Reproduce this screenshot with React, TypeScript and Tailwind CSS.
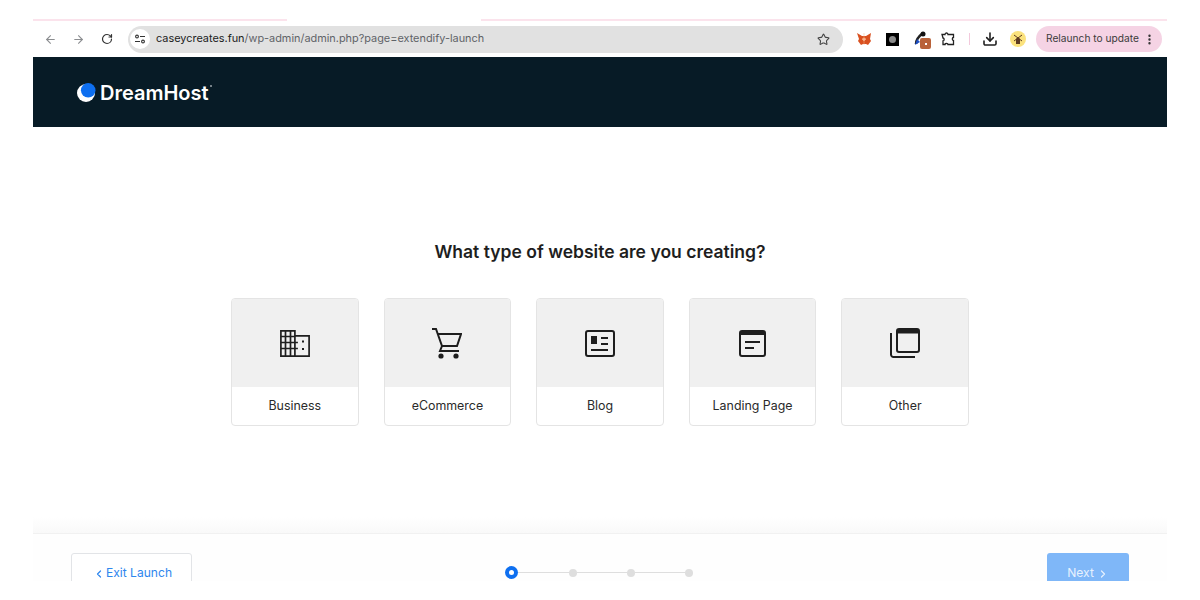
import { ArrowLeft, ArrowRight, ChevronLeft, ChevronRight, Download, EllipsisVertical, RotateCw, Star } from "lucide-react";

const font = "font-['Inter','Liberation_Sans',sans-serif]";

function BusinessIcon() {
  return (
    <svg width="30" height="27" viewBox="0 0 30 27" fill="none" stroke="#1e1e1e" strokeWidth="1.7">
      <path d="M.9.9h14v25.2H.9zM14.9 5.9h14.2v20.2H14.9zM.9 6.5h14M.9 12.5h17M.9 18.5h17M5.5.9v25.2M10.5.9v25.2" />
      <path d="M23 10.5v2M23 18v2" strokeWidth="2" />
    </svg>
  );
}

function CartIcon() {
  return (
    <svg width="30" height="31" viewBox="0 0 30 31" fill="none" stroke="#1e1e1e" strokeWidth="2">
      <path d="M0 1h4l6 17h15l4-12H6" />
      <path d="M10 18l-2 5h19" />
      <circle cx="9" cy="28" r="2.6" fill="#1e1e1e" stroke="none" />
      <circle cx="24" cy="28" r="2.6" fill="#1e1e1e" stroke="none" />
    </svg>
  );
}

function BlogIcon() {
  return (
    <svg width="30" height="27" viewBox="0 0 30 27" fill="none" stroke="#1e1e1e" strokeWidth="2">
      <rect x="1" y="1" width="28" height="25" rx="2" />
      <rect x="6" y="6" width="6" height="8" fill="#1e1e1e" stroke="none" />
      <path d="M16 8h7M16 14h7M6 20h17" />
    </svg>
  );
}

function LandingIcon() {
  return (
    <svg width="27" height="27" viewBox="0 0 27 27" fill="none" stroke="#1e1e1e" strokeWidth="2">
      <rect x="1" y="1" width="25" height="25" rx="2" />
      <path d="M1 3h25" strokeWidth="4" />
      <path d="M6 12h15M6 18h9" />
    </svg>
  );
}

function OtherIcon() {
  return (
    <svg width="30" height="30" viewBox="0 0 30 30" fill="none" stroke="#1e1e1e" strokeWidth="2">
      <rect x="7" y="1" width="22" height="23" rx="2" />
      <path d="M7 3.5h22" strokeWidth="4" />
      <path d="M1 5v21.5A2.5 2.5 0 0 0 3.5 29H25" />
    </svg>
  );
}

function Logo() {
  return (
    <svg width="19" height="19" viewBox="0 0 19 19">
      <circle cx="9" cy="10" r="9" fill="#fff" />
      <circle cx="11.2" cy="7.3" r="7.3" fill="#0e6ff0" />
    </svg>
  );
}

function Extensions() {
  return (
    <div className="flex items-center">
      <svg width="14" height="12" viewBox="0 0 14 12" className="ml-[14px]">
        <path d="M0 0l5 3h4l5-3-1 6 1 2-3 4-2-1H6l-2 1-3-4 1-2z" fill="#d9501f" />
        <path d="M5 6l2 2 2-2-2-1zM7 0v12" fill="#f7b58f" stroke="#f7b58f" strokeWidth=".5" />
      </svg>
      <div className="ml-[15px] flex h-[13px] w-[13px] items-center justify-center bg-black">
        <div className="h-[7px] w-[7px] rounded-full bg-[#8a8a8a]" />
      </div>
      <div className="relative ml-[15px] h-[16px] w-[16px]">
        <svg width="14" height="15" viewBox="0 0 14 15">
          <path d="M2 13C2 8 5 5 9 2" stroke="#222" strokeWidth="2.5" fill="none" />
          <circle cx="9" cy="3" r="2.5" fill="#111" />
          <path d="M1 14l2-6 3 3z" fill="#1c4fc4" />
        </svg>
        <div className="absolute left-[6px] top-[7px] flex h-[11px] w-[11px] items-center justify-center rounded-[2px] bg-[#b9623a]">
          <div className="h-[2px] w-[2px] bg-white" />
        </div>
      </div>
      <svg width="14" height="14" viewBox="0 0 14 14" fill="none" stroke="#222" strokeWidth="1.3" className="ml-[11px]">
        <path d="M1 2.5h3c0-2 3-2 3 0h5.5v3c-1.6 0-1.6 3 0 3v4H7c0-1.5-3-1.5-3 0H2V9c1.5 0 1.5-3 0-3z" />
      </svg>
      <div className="ml-[14px] h-[12px] w-px bg-[#f3c9dc]" />
      <Download size={16} color="#1f1f1f" strokeWidth={2.4} className="ml-[12px]" />
      <div className="ml-[12px] flex h-[16px] w-[16px] items-center justify-center rounded-full bg-[#fbe27d]">
        <svg width="10" height="10" viewBox="0 0 10 10">
          <path d="M3 10V5l2-2 2 2v5z" fill="#5d3a22" />
          <path d="M1 7l8-6M1 1l8 6" stroke="#5d3a22" strokeWidth="1" />
        </svg>
      </div>
    </div>
  );
}

function BrowserBar() {
  return (
    <div className="flex h-[36px] items-center pl-[11px] pr-[5px]">
      <ArrowLeft size={13} color="#8b8d90" />
      <ArrowRight size={13} color="#8b8d90" className="ml-[15px]" />
      <RotateCw size={12} color="#333" strokeWidth={2.4} className="ml-[16px]" />
      <div className="ml-[15px] flex h-[27px] w-[715px] items-center rounded-full bg-[#e1e1e1] pl-[2px] pr-[13px]">
        <div className="flex h-[20px] w-[20px] items-center justify-center rounded-full bg-white">
          <svg width="12" height="10" viewBox="0 0 12 10" fill="none" stroke="#333" strokeWidth="1.1">
            <circle cx="3" cy="2.5" r="1.4" />
            <path d="M6 2.5h5M1 7.5h5" />
            <circle cx="9" cy="7.5" r="1.4" />
          </svg>
        </div>
        <span className="mb-px ml-[6px] text-[10.9px] text-[#5f6368]">
          <span className="text-[#222]">caseycreates.fun</span>/wp-admin/admin.php?page=extendify-launch
        </span>
        <Star size={13} color="#444" className="ml-auto" />
      </div>
      <Extensions />
      <div className="ml-[10px] flex h-[26px] flex-1 items-center justify-between rounded-full bg-[#f5d3e4] pl-[10px] pr-[6px]">
        <span className="text-[10.2px] text-[#3b3b3b]">Relaunch to update</span>
        <EllipsisVertical size={13} color="#333" strokeWidth={2.4} />
      </div>
    </div>
  );
}

const cards = [
  { label: "Business", icon: <BusinessIcon /> },
  { label: "eCommerce", icon: <CartIcon /> },
  { label: "Blog", icon: <BlogIcon /> },
  { label: "Landing Page", icon: <LandingIcon /> },
  { label: "Other", icon: <OtherIcon /> },
];

export default function App() {
  return (
    <div className={`${font} h-[600px] w-[1200px] overflow-hidden bg-white px-[33px] pt-[19px]`}>
      <div className="flex h-[2px]">
        <div className="w-[254px] bg-[#fbe3ec]" />
        <div className="w-[194px]" />
        <div className="flex-1 bg-[#fbe3ec]" />
      </div>
      <BrowserBar />
      <div className="flex h-[70px] items-center bg-[#071b26] pl-[44px]">
        <Logo />
        <span className="ml-[4px] mt-[2px] text-[20px] font-semibold leading-none text-white">DreamHost</span>
        <span className="mb-[12px] ml-[1px] h-[2px] w-[2px] rounded-full bg-[#9aa3a8]" />
      </div>
      <main className="flex h-[406px] flex-col items-center bg-gradient-to-b from-white from-[96%] to-[#f9f9f9] pt-[113px]">
        <h1 className="text-[17.55px] font-semibold leading-[24px] text-[#1e1e1e]">What type of website are you creating?</h1>
        <div className="mt-[34px] flex gap-[25px]">
          {cards.map((c) => (
            <div key={c.label} className="flex h-[128px] w-[127.6px] flex-col overflow-hidden rounded-[4px] border border-[#e4e4e4] bg-white">
              <div className="flex h-[88px] items-center justify-center bg-[#f0f0f0]">{c.icon}</div>
              <div className="flex flex-1 items-center justify-center pt-px text-[12.4px] text-[#2a2a2a]">{c.label}</div>
            </div>
          ))}
        </div>
      </main>
      <footer className="flex h-[48px] items-start justify-between overflow-hidden border-t border-[#f1f1f1] bg-[#fefefe] px-[38px] pt-[19px]">
        <div className="flex h-[40px] w-[121px] items-start justify-center rounded-[3px] border border-[#e2e4e7] bg-white pl-[2px] pt-[11px] text-[12.1px] leading-[16px] text-[#2e86ee]">
          <ChevronLeft size={12} strokeWidth={2.4} className="mr-[1px] mt-[3px]" />
          Exit Launch
        </div>
        <div className="mr-[42px] mt-[13px] flex items-center">
          <div className="flex h-[13px] w-[13px] items-center justify-center rounded-full bg-[#0e6ff0]">
            <div className="h-[5px] w-[5px] rounded-full bg-white" />
          </div>
          <div className="h-px w-[51px] bg-[#dedede]" />
          <div className="h-[8px] w-[8px] rounded-full bg-[#dedede]" />
          <div className="h-px w-[50px] bg-[#dedede]" />
          <div className="h-[8px] w-[8px] rounded-full bg-[#dedede]" />
          <div className="h-px w-[50px] bg-[#dedede]" />
          <div className="h-[8px] w-[8px] rounded-full bg-[#dedede]" />
        </div>
        <div className="flex h-[40px] w-[82px] items-start justify-center rounded-[3px] bg-[#7fb7f8] pt-[12px] text-[12.1px] leading-[16px] text-[#e6f1fe]">
          Next
          <ChevronRight size={12} strokeWidth={2.4} className="ml-[3px] mt-[3px]" />
        </div>
      </footer>
    </div>
  );
}
